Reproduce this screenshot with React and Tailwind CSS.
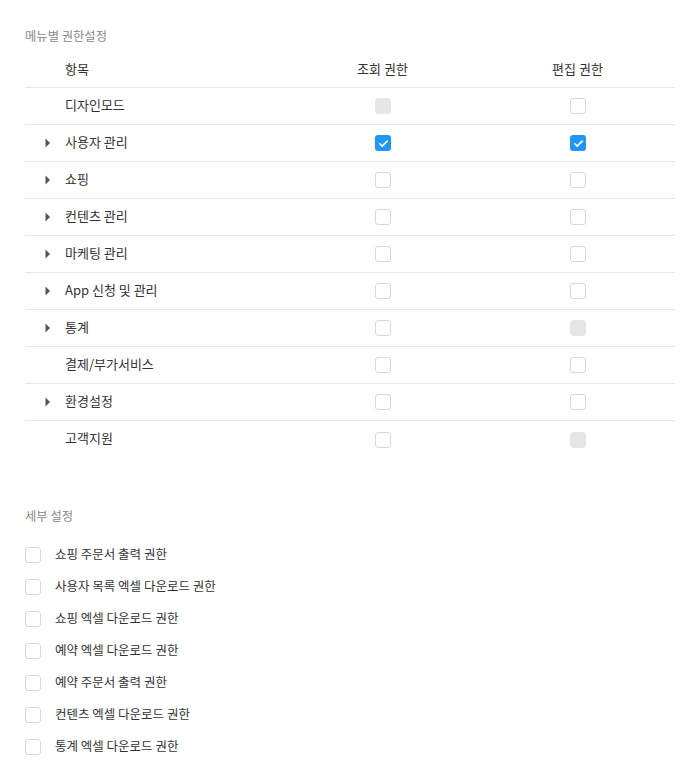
import React from 'react';

const rows = [
  { name: '디자인모드', arrow: false, view: 'disabled', edit: 'off' },
  { name: '사용자 관리', arrow: true, view: 'on', edit: 'on' },
  { name: '쇼핑', arrow: true, view: 'off', edit: 'off' },
  { name: '컨텐츠 관리', arrow: true, view: 'off', edit: 'off' },
  { name: '마케팅 관리', arrow: true, view: 'off', edit: 'off' },
  { name: 'App 신청 및 관리', arrow: true, view: 'off', edit: 'off' },
  { name: '통계', arrow: true, view: 'off', edit: 'disabled' },
  { name: '결제/부가서비스', arrow: false, view: 'off', edit: 'off' },
  { name: '환경설정', arrow: true, view: 'off', edit: 'off' },
  { name: '고객지원', arrow: false, view: 'off', edit: 'disabled' },
];

const details = [
  '쇼핑 주문서 출력 권한',
  '사용자 목록 엑셀 다운로드 권한',
  '쇼핑 엑셀 다운로드 권한',
  '예약 엑셀 다운로드 권한',
  '예약 주문서 출력 권한',
  '컨텐츠 엑셀 다운로드 권한',
  '통계 엑셀 다운로드 권한',
];

const Checkbox = ({ state }) => {
  if (state === 'on') {
    return (
      <span className="w-4 h-4 rounded-[3px] bg-[#2196f3] flex items-center justify-center">
        <svg width="11" height="11" viewBox="0 0 12 12" fill="none">
          <path d="M2 6.3l2.6 2.5L10 3.4" stroke="white" strokeWidth="1.8" strokeLinecap="round" strokeLinejoin="round" />
        </svg>
      </span>
    );
  }
  if (state === 'disabled') {
    return <span className="w-4 h-4 rounded-[3px] bg-[#e4e6e7] border border-[#e4e6e7] block" />;
  }
  return <span className="w-4 h-4 rounded-[3px] bg-white border border-[#d3d8dc] block" />;
};

const App = () => {
  return (
    <div className="bg-white w-[700px] min-h-[780px] px-[25px] pt-[26px] text-[13px] text-[#333]" style={{ fontFamily: '"Noto Sans CJK KR", "Noto Sans", sans-serif' }}>
      {/* 메뉴별 권한설정 */}
      <div className="text-[12.3px] text-[#888] leading-5">메뉴별 권한설정</div>

      <div className="mt-[14px]">
        <div className="grid grid-cols-[260px_195px_195px] h-[28px] items-start border-b border-[#e8e8e8]">
          <div className="pl-10 leading-5 pb-[2px] -mt-[1px] text-[#333]">항목</div>
          <div className="text-center leading-5 -mt-[1px]">조회 권한</div>
          <div className="text-center leading-5 -mt-[1px]">편집 권한</div>
        </div>

        {rows.map((row, i) => (
          <div
            key={row.name}
            className={`grid grid-cols-[260px_195px_195px] h-[37px] items-center ${i < rows.length - 1 ? 'border-b border-[#e8e8e8]' : ''}`}
          >
            <div className="flex items-center">
              <span className="w-10 flex justify-center pl-[5px]">
                {row.arrow && (
                  <svg width="6" height="10" viewBox="0 0 6 10">
                    <path d="M0.5 0.5L5 5L0.5 9.5Z" fill="#555" />
                  </svg>
                )}
              </span>
              <span className="leading-5 pb-[3px]">{row.name}</span>
            </div>
            <div className="flex justify-center pl-[1px]">
              <Checkbox state={row.view} />
            </div>
            <div className="flex justify-center pl-[1px]">
              <Checkbox state={row.edit} />
            </div>
          </div>
        ))}
      </div>

      {/* 세부 설정 */}
      <div className="mt-[48px] text-[12.3px] text-[#888] leading-5 pb-[1px] -mt-[1px]">세부 설정</div>

      <div className="mt-[20px] flex flex-col gap-[16px]">
        {details.map((d) => (
          <div key={d} className="flex items-center h-4">
            <Checkbox state="off" />
            <span className="ml-[14px] text-[12.5px] leading-5 pb-[2px] text-[#333]">{d}</span>
          </div>
        ))}
      </div>
    </div>
  );
};

export default App;
